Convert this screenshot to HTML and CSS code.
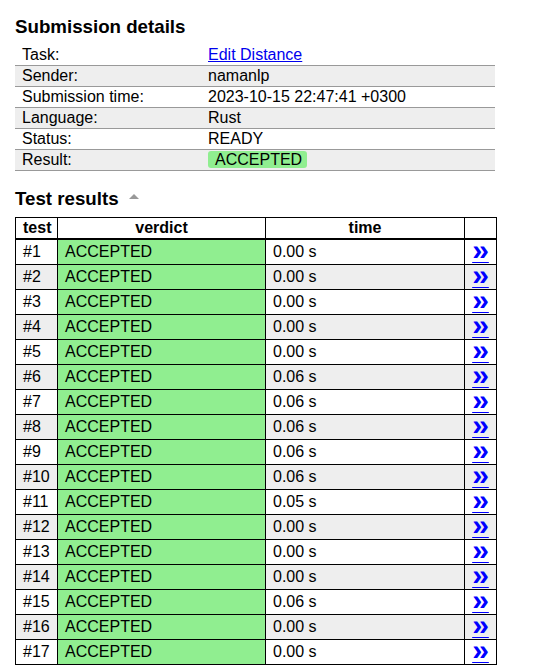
FILE: index.html
```html
<!DOCTYPE html>
<html lang="en">
<head>
    <meta charset="UTF-8">
    <title>Submission details</title>
    <link rel="stylesheet" href="styles.css">
</head>
<body>

    <div class="content">
        <h3>Submission details</h3>
        <table class="summary-table">
            <tr><td class="label">Task:</td><td><a href="#">Edit Distance</a></td></tr>
            <tr><td class="label">Sender:</td><td>namanlp</td></tr>
            <tr><td class="label">Submission time:</td><td>2023-10-15 22:47:41 +0300</td></tr>
            <tr><td class="label">Language:</td><td>Rust</td></tr>
            <tr><td class="label">Status:</td><td>READY</td></tr>
            <tr><td class="label">Result:</td><td><span class="badge">ACCEPTED</span></td></tr>
        </table>

        <h3 class="results-title">Test results
            <svg class="toggle" width="10" height="5" viewBox="0 0 10 5"><polygon points="0,5 5,0 10,5" fill="#999"/></svg>
        </h3>

        <table class="results-table">
            <colgroup>
                <col class="c-test">
                <col class="c-verdict">
                <col class="c-time">
                <col class="c-link">
            </colgroup>
            <tr><th>test</th><th>verdict</th><th>time</th><th></th></tr>
            <tr><td>#1</td><td class="ok">ACCEPTED</td><td>0.00 s</td><td class="more"><a href="#">»</a></td></tr>
            <tr><td>#2</td><td class="ok">ACCEPTED</td><td>0.00 s</td><td class="more"><a href="#">»</a></td></tr>
            <tr><td>#3</td><td class="ok">ACCEPTED</td><td>0.00 s</td><td class="more"><a href="#">»</a></td></tr>
            <tr><td>#4</td><td class="ok">ACCEPTED</td><td>0.00 s</td><td class="more"><a href="#">»</a></td></tr>
            <tr><td>#5</td><td class="ok">ACCEPTED</td><td>0.00 s</td><td class="more"><a href="#">»</a></td></tr>
            <tr><td>#6</td><td class="ok">ACCEPTED</td><td>0.06 s</td><td class="more"><a href="#">»</a></td></tr>
            <tr><td>#7</td><td class="ok">ACCEPTED</td><td>0.06 s</td><td class="more"><a href="#">»</a></td></tr>
            <tr><td>#8</td><td class="ok">ACCEPTED</td><td>0.06 s</td><td class="more"><a href="#">»</a></td></tr>
            <tr><td>#9</td><td class="ok">ACCEPTED</td><td>0.06 s</td><td class="more"><a href="#">»</a></td></tr>
            <tr><td>#10</td><td class="ok">ACCEPTED</td><td>0.06 s</td><td class="more"><a href="#">»</a></td></tr>
            <tr><td>#11</td><td class="ok">ACCEPTED</td><td>0.05 s</td><td class="more"><a href="#">»</a></td></tr>
            <tr><td>#12</td><td class="ok">ACCEPTED</td><td>0.00 s</td><td class="more"><a href="#">»</a></td></tr>
            <tr><td>#13</td><td class="ok">ACCEPTED</td><td>0.00 s</td><td class="more"><a href="#">»</a></td></tr>
            <tr><td>#14</td><td class="ok">ACCEPTED</td><td>0.00 s</td><td class="more"><a href="#">»</a></td></tr>
            <tr><td>#15</td><td class="ok">ACCEPTED</td><td>0.06 s</td><td class="more"><a href="#">»</a></td></tr>
            <tr><td>#16</td><td class="ok">ACCEPTED</td><td>0.00 s</td><td class="more"><a href="#">»</a></td></tr>
            <tr><td>#17</td><td class="ok">ACCEPTED</td><td>0.00 s</td><td class="more"><a href="#">»</a></td></tr>
        </table>
    </div>

</body>
</html>
```

FILE: styles.css
```css
body {
    font-family: 'Liberation Sans', Arial, sans-serif;
    font-size: 16px;
    color: #000;
    margin: 0;
    padding: 0;
    background: #fff;
}

.content {
    padding: 16px 15px 0 15px;
}

h3 {
    font-size: 18.72px;
    font-weight: bold;
    margin: 0 0 7px 0;
}

a {
    color: #0000ee;
}

.summary-table {
    border-collapse: collapse;
    width: 480px;
}

.summary-table td {
    padding: 1px 7px;
    line-height: 18px;
    border-bottom: 1px solid #999;
}

.summary-table td.label {
    width: 172px;
}

.summary-table tr:nth-child(even) td {
    background: #eee;
}

.badge {
    display: inline-block;
    background: #90ee90;
    border-radius: 3px;
    padding: 0 5px 0 7px;
    line-height: 17px;
}

.results-title {
    margin-top: 17px;
}

.toggle {
    margin-left: 5px;
    vertical-align: 6px;
}

.results-table {
    border-collapse: collapse;
    table-layout: fixed;
    width: 481px;
}

.c-test { width: 42px; }
.c-verdict { width: 208px; }
.c-time { width: 199px; }
.c-link { width: 32px; }

.results-table th {
    border: 1px solid #000;
    border-bottom: 2px solid #000;
    padding: 1px 7px;
    line-height: 18px;
    text-align: center;
}

.results-table td {
    border: 1px solid #000;
    padding: 3px 7px;
    line-height: 18px;
}

.results-table tr:nth-child(odd) td {
    background: #eee;
}

.results-table tr td.ok {
    background: #90ee90;
}

.results-table td.more {
    text-align: center;
    padding: 0;
}

.more a {
    color: #0000ff;
    font-weight: bold;
    font-size: 30px;
    line-height: 18px;
    text-decoration-thickness: 1px;
    text-underline-offset: 2px;
}
```
